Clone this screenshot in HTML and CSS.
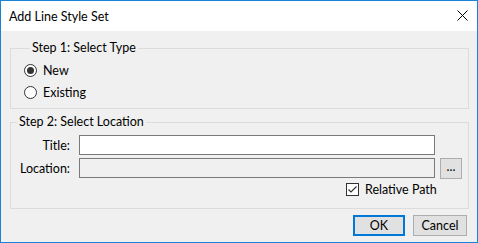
FILE: index.html
```html
<!DOCTYPE html>
<html lang="en">
<head>
    <meta charset="UTF-8">
    <title>Add Line Style Set</title>
    <link rel="stylesheet" href="styles.css">
</head>
<body>
    <div class="window">
        <div class="titlebar">
            <span class="title">Add Line Style Set</span>
            <svg class="close" width="11" height="11" viewBox="0 0 11 11">
                <path d="M0.5 0.5 L10.5 10.5 M10.5 0.5 L0.5 10.5" stroke="#000" stroke-width="1" fill="none"/>
            </svg>
        </div>
        <div class="client">
            <fieldset class="group group-type">
                <legend>Step 1: Select Type</legend>
                <label class="radio-row">
                    <span class="radio checked"></span>
                    <span>New</span>
                </label>
                <label class="radio-row">
                    <span class="radio"></span>
                    <span>Existing</span>
                </label>
            </fieldset>
            <fieldset class="group group-location">
                <legend>Step 2: Select Location</legend>
                <div class="field-row">
                    <span class="field-label">Title:</span>
                    <span class="textbox"></span>
                </div>
                <div class="field-row">
                    <span class="field-label">Location:</span>
                    <span class="textbox readonly"></span>
                    <span class="browse">...</span>
                </div>
                <div class="check-row">
                    <span class="checkbox">
                        <svg width="11" height="11" viewBox="0 0 11 11">
                            <path d="M1.5 5.5 L4 8 L9.5 2.5" stroke="#333" stroke-width="1.2" fill="none"/>
                        </svg>
                    </span>
                    <span>Relative Path</span>
                </div>
            </fieldset>
            <div class="buttons">
                <span class="btn btn-default">OK</span>
                <span class="btn">Cancel</span>
            </div>
        </div>
    </div>
</body>
</html>
```

FILE: styles.css
```css
html, body {
    margin: 0;
    padding: 0;
}
body {
    font-family: Lato, "Liberation Sans", sans-serif;
    font-size: 12.5px;
    color: #000;
    background: #fff;
}
.window {
    width: 478px;
    height: 243px;
    box-sizing: border-box;
    border: 1px solid #1883d7;
    display: flex;
    flex-direction: column;
}
.titlebar {
    height: 30px;
    background: #fff;
    display: flex;
    align-items: center;
    justify-content: space-between;
    padding: 0 9px 0 8px;
    flex-shrink: 0;
}
.close {
    margin-top: -1px;
}
.client {
    flex: 1;
    background: #f0f0f0;
    padding: 10px 8px 0 9px;
}
.group {
    margin: 0;
    padding: 0;
    border: 1px solid #dcdcdc;
    min-width: 0;
}
.group legend {
    margin-left: 6px;
    padding: 0 2px;
    line-height: 14px;
}
.group-type {
    padding: 7px 0 8px 13px;
    display: flex;
    flex-direction: column;
    gap: 6px;
}
.radio-row {
    display: flex;
    align-items: center;
    height: 16px;
    gap: 6px;
}
.radio {
    width: 13px;
    height: 13px;
    box-sizing: border-box;
    border: 1px solid #333;
    border-radius: 50%;
    background: #fff;
    display: flex;
    align-items: center;
    justify-content: center;
}
.radio.checked::after {
    content: "";
    width: 7px;
    height: 7px;
    border-radius: 50%;
    background: #333;
}
.group-location {
    margin-top: 6px;
    padding: 6px 0 12px 0;
}
.field-row {
    display: flex;
    align-items: center;
    height: 20px;
    margin-bottom: 3px;
}
.field-label {
    width: 59px;
    text-align: right;
    margin-right: 9px;
}
.textbox {
    width: 356px;
    height: 20px;
    box-sizing: border-box;
    border: 1px solid #7a7a7a;
    background: #fff;
}
.textbox.readonly {
    background: #f0f0f0;
}
.browse {
    margin-left: 5px;
    width: 22px;
    height: 21px;
    box-sizing: border-box;
    border: 1px solid #adadad;
    background: #e1e1e1;
    display: flex;
    align-items: center;
    justify-content: center;
    line-height: 1;
    padding-bottom: 2px;
}
.check-row {
    display: flex;
    align-items: center;
    margin: 5px 0 0 335px;
    gap: 6px;
    height: 13px;
}
.checkbox {
    width: 13px;
    height: 13px;
    box-sizing: border-box;
    border: 1px solid #333;
    background: #fff;
    display: flex;
    align-items: center;
    justify-content: center;
}
.buttons {
    display: flex;
    justify-content: flex-end;
    gap: 8px;
    margin-top: 6px;
    padding-right: 2px;
}
.btn {
    width: 54px;
    height: 21px;
    box-sizing: border-box;
    border: 1px solid #adadad;
    background: #e1e1e1;
    display: flex;
    align-items: center;
    justify-content: center;
}
.btn-default {
    width: 52px;
    border: 2px solid #0078d7;
}
```
